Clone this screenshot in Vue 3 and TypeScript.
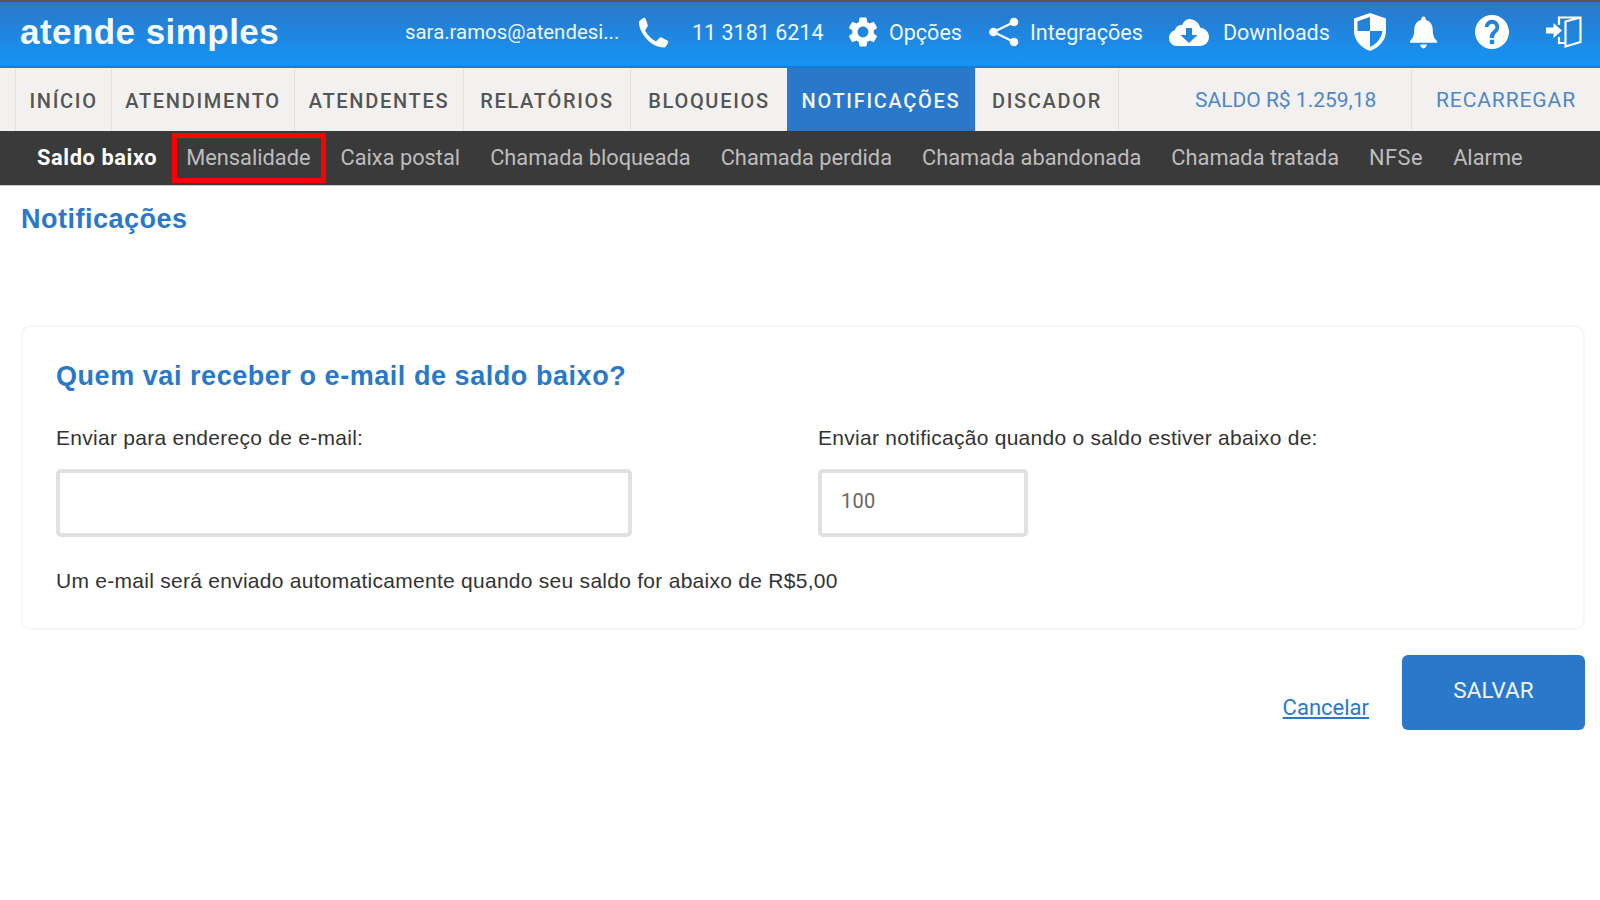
<script setup lang="ts">
const navItems = ['INÍCIO', 'ATENDIMENTO', 'ATENDENTES', 'RELATÓRIOS', 'BLOQUEIOS', 'NOTIFICAÇÕES', 'DISCADOR']
const subItems = ['Saldo baixo', 'Mensalidade', 'Caixa postal', 'Chamada bloqueada', 'Chamada perdida', 'Chamada abandonada', 'Chamada tratada', 'NFSe', 'Alarme']
</script>

<template>
  <div class="page">
    <header class="topbar">
      <div class="logo">atende simples</div>
      <div class="tools">
        <span class="email">sara.ramos@atendesi...</span>
        <svg class="i-phone" viewBox="3 3 18 18"><path d="M6.62 10.79c1.44 2.83 3.76 5.14 6.59 6.59l2.2-2.2c.27-.27.67-.36 1.02-.24 1.12.37 1.6.9 3.57 1.9.55.3.8.9.4 1.6l-1.2 1.8c-.3.4-.8.76-1.4.76C10 21 3 12 3 6c0-.6.3-1.1.8-1.4L5.4 3.4c.5-.4 1.2-.2 1.5.3.8 1.7 1 2.6 1.35 3.8.11.35.03.74-.25 1.02l-1.38 2.27z"/></svg>
        <span class="phone">11 3181 6214</span>
        <svg class="i-gear" viewBox="2 2 20 20"><path d="M19.14 12.94c.04-.3.06-.61.06-.94 0-.32-.02-.64-.07-.94l2.03-1.58c.18-.14.23-.41.12-.61l-1.92-3.32c-.12-.22-.37-.29-.59-.22l-2.39.96c-.5-.38-1.03-.7-1.62-.94l-.36-2.54c-.04-.24-.24-.41-.48-.41h-3.84c-.24 0-.43.17-.47.41l-.36 2.54c-.59.24-1.13.57-1.62.94l-2.39-.96c-.22-.08-.47 0-.59.22L2.74 8.87c-.12.21-.08.47.12.61l2.03 1.58c-.05.3-.09.63-.09.94s.02.64.07.94l-2.03 1.58c-.18.14-.23.41-.12.61l1.92 3.32c.12.22.37.29.59.22l2.39-.96c.5.38 1.03.7 1.62.94l.36 2.54c.05.24.24.41.48.41h3.84c.24 0 .44-.17.47-.41l.36-2.54c.59-.24 1.13-.56 1.62-.94l2.39.96c.22.08.47 0 .59-.22l1.92-3.32c.12-.22.07-.47-.12-.61l-2.01-1.58zM12 15.6c-1.98 0-3.6-1.62-3.6-3.6s1.62-3.6 3.6-3.6 3.6 1.62 3.6 3.6-1.62 3.6-3.6 3.6z"/></svg>
        <span class="opcoes">Opções</span>
        <svg class="i-share" viewBox="0 0 30 30"><circle cx="25" cy="5" r="4.300"/><circle cx="4.500" cy="15" r="4.300"/><circle cx="25" cy="25" r="4.300"/><path d="M25 5 4.500 15 25 25" fill="none" stroke="#fff" stroke-width="2.200"/></svg>
        <span class="integracoes">Integrações</span>
        <svg class="i-cloud" viewBox="0 0 40 27"><path fill-rule="evenodd" d="M20 0c5.600 0 10 3.600 11.300 8.800C36.300 9.200 40 13.200 40 18c0 5-4 9-9 9H8c-4.500 0-8-3.500-8-8 0-3.600 2.400-6.700 5.700-7.700C6.800 7.700 9.800 5.800 13 6 14.800 2.400 17.200 0 20 0zM17 9v7h-5.500l8.500 8 8.500-8H23V9z"/></svg>
        <span class="downloads">Downloads</span>
        <svg class="i-shield" viewBox="0 0 32 38"><path fill-rule="evenodd" d="M16 0 32 5.500V18c0 9-6.500 16.500-16 20C6.500 34.500 0 27 0 18V5.500zM16 4 3.500 8.200V18h12.500zM16 18v16c6.800-3 11.500-8.800 12.400-16z"/></svg>
        <svg class="i-bell" viewBox="0 0 28 33"><path d="M14 0c1.400 0 2.300 1 2.300 2.400v1C21 4.800 23.600 9 23.600 14c0 6 1.600 8.600 4.400 11.500V27H0v-1.500C2.800 22.600 4.400 20 4.400 14c0-5 2.600-9.200 7.300-10.600v-1C11.700 1 12.600 0 14 0zM10.500 29h7c-.4 2.400-1.800 4-3.500 4s-3.100-1.600-3.500-4z"/></svg>
        <svg class="i-help" viewBox="2 2 20 20"><path d="M12 2C6.480 2 2 6.480 2 12s4.480 10 10 10 10-4.480 10-10S17.520 2 12 2zm1.300 17h-2.600v-2.400h2.600v2.400zm2.200-7.400-.9.900c-1 1-1.300 1.700-1.300 3h-2.600v-.6c0-1.300.5-2.400 1.400-3.200l1.300-1.300c.4-.4.6-.8.600-1.400 0-1-.9-1.900-2-1.900s-2 .9-2 2H7.800c0-2.400 1.900-4.300 4.200-4.300s4.200 1.800 4.200 4.100c0 1-.3 1.900-.7 2.700z"/></svg>
        <svg class="i-door" viewBox="0 0 36 32"><path d="M13 9V1.500h21.500V26L19.500 30.500V5.500L34.500 1.500M13 21v6h6.500" fill="none" stroke="#fff" stroke-width="2.200"/><path d="M0 11.500h7.500V7l8.500 7.500L7.500 22v-4.500H0z"/></svg>
      </div>
    </header>

    <nav class="mainnav">
      <a v-for="item in navItems" :key="item" class="navitem" :class="{ active: item === 'NOTIFICAÇÕES' }">{{ item }}</a>
      <div class="balance">SALDO R$ 1.259,18</div>
      <div class="recharge">RECARREGAR</div>
    </nav>

    <nav class="subnav">
      <a v-for="item in subItems" :key="item" class="subitem" :class="{ current: item === 'Saldo baixo', boxed: item === 'Mensalidade', wide: item === 'NFSe' }">{{ item }}</a>
    </nav>

    <main class="content">
      <h1 class="title">Notificações</h1>
      <section class="card">
        <h2 class="question">Quem vai receber o e-mail de saldo baixo?</h2>
        <div class="fields">
          <div class="field-email">
            <label>Enviar para endereço de e-mail:</label>
            <div class="input"></div>
          </div>
          <div class="field-value">
            <label>Enviar notificação quando o saldo estiver abaixo de:</label>
            <div class="input small">100</div>
          </div>
        </div>
        <p class="hint">Um e-mail será enviado automaticamente quando seu saldo for abaixo de R$5,00</p>
      </section>
      <div class="actions">
        <a class="cancel">Cancelar</a>
        <button class="save">SALVAR</button>
      </div>
    </main>
  </div>
</template>

<style scoped>
.page { width: 1600px; height: 900px; background: #fff; overflow: hidden; font-family: Roboto, sans-serif; }

.topbar {
  height: 68px; box-sizing: border-box; display: flex; align-items: center;
  border-top: 2px solid #555; border-bottom: 2px solid #0f7fd6;
  background: linear-gradient(#2a78c9, #1594f6); color: #eef6ff; padding-left: 20px;
}
.logo { width: 385px; font: 700 35px/1 "Liberation Sans", sans-serif; color: #f4f9ff; letter-spacing: 0.450px; padding-bottom: 6px; }
.tools { display: flex; align-items: center; font-size: 21.500px; padding-bottom: 4px; }
.tools svg { fill: #fff; display: block; flex: none; }
.email { width: 234px; font-size: 20.400px; }
.i-phone { width: 30px; height: 31px; }
.phone { margin-left: 23px; width: 156px; }
.i-gear { width: 30px; height: 30px; }
.opcoes { margin-left: 11px; width: 100px; }
.i-share { width: 30px; height: 30px; }
.integracoes { margin-left: 11px; width: 139px; }
.i-cloud { width: 40px; height: 27px; }
.downloads { margin-left: 14px; width: 131px; }
.i-shield { width: 32px; height: 38px; }
.i-bell { width: 27px; height: 33px; margin-left: 24px; }
.i-help { width: 34px; height: 34px; margin-left: 38px; }
.i-door { width: 36px; height: 32px; margin-left: 37px; }

.mainnav {
  height: 63px; display: grid; background: #f2f1f0; padding-left: 15px; box-sizing: border-box;
  grid-template-columns: 96px 183px 169px 167px 157px 188px 143px 293px 1fr;
}
.navitem {
  display: flex; align-items: center; justify-content: center; border-left: 1px solid #e2e1e0;
  font-size: 20px; font-weight: 500; letter-spacing: 1.700px; color: #555; padding-top: 3px;
}
.navitem.active { background: #2a78c9; color: #f2f6fb; border-left: 0; }
.balance {
  border-left: 1px solid #e2e1e0; display: flex; align-items: center; padding-left: 76px;
  font-size: 21px; color: #4f86c9;
}
.recharge { border-left: 1px solid #e2e1e0; display: flex; align-items: center; padding-left: 24px; font-size: 21px; letter-spacing: 0.900px; color: #4f86c9; }

.subnav { height: 55px; box-sizing: border-box; border-bottom: 1px solid #ccc; background: #3a3a3a; display: flex; align-items: center; padding: 0 0 0 22px; font-size: 21.800px; line-height: 26px; color: #bdbdbd; }
.subitem { padding: 0 15px; position: relative; }
.subitem.current { color: #fff; font-weight: 700; letter-spacing: 0.600px; margin-right: -1px; }
.subitem.wide { letter-spacing: 0.500px; }
.subitem.boxed::after { content: ""; position: absolute; left: 1px; right: 0; top: -12px; bottom: -12px; border: 5px solid #f00; }

.content { padding: 0 15px 0 21px; }
.title { margin: 17px 0 0; font: 700 27px/32px "Liberation Sans", sans-serif; letter-spacing: 0.500px; color: #2a78c9; }
.card {
  margin-top: 90px; height: 305px; box-sizing: border-box; border: 2px solid #f3f7fd; border-radius: 10px;
  padding: 32px 32px 0 33px; color: #333; font: 21px/26px "Liberation Sans", sans-serif; letter-spacing: 0.270px;
}
.question { margin: 0; font: 700 27px/34px "Liberation Sans", sans-serif; letter-spacing: 0.550px; color: #2a78c9; }
.fields { display: flex; margin-top: 32px; }
.field-email { width: 762px; }
.input { height: 68px; width: 576px; box-sizing: border-box; border: 4px solid #e0e0e0; border-radius: 5px; margin-top: 18px; padding: 0 19px 4px; display: flex; align-items: center; color: #666; font-family: Roboto, sans-serif; font-size: 20px; }
.input.small { width: 210px; }
.hint { margin: 31px 0 0; }
.actions { display: flex; justify-content: flex-end; margin-top: 25px; }
.cancel { color: #2a78c9; font-size: 22px; text-decoration: underline; margin: 40px 33px 0 0; line-height: 26px; }
.save { width: 183px; height: 75px; border: 0; border-radius: 6px; background: #2a78cc; color: #eef5fd; font: 400 22.500px Roboto, sans-serif; padding-bottom: 6px; }
</style>
